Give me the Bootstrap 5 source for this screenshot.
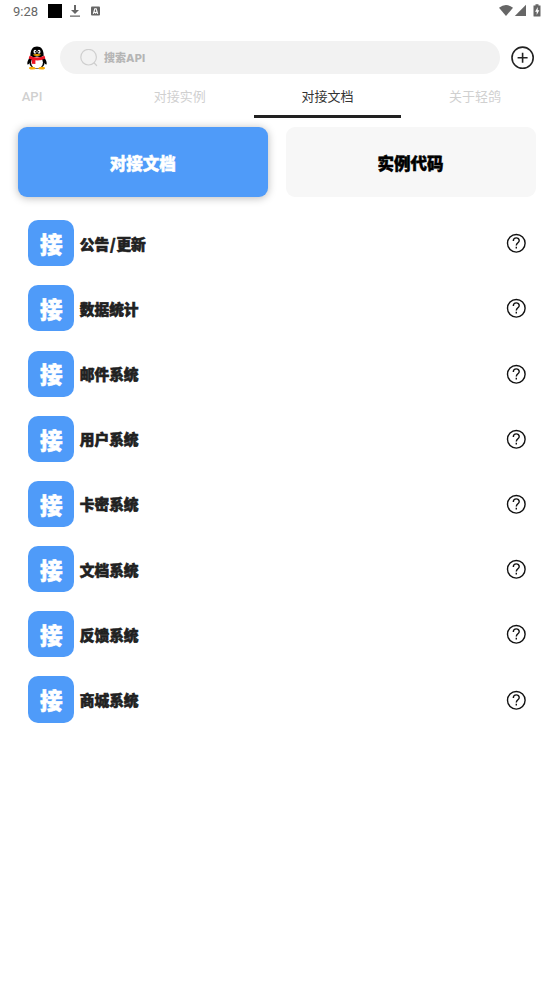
<!DOCTYPE html>
<html lang="zh-CN">
<head>
  <meta charset="UTF-8">
  <meta name="viewport" content="width=device-width, initial-scale=1">
  <title>对接文档</title>
  <link href="https://cdn.jsdelivr.net/npm/bootstrap@5.3.2/dist/css/bootstrap.min.css" rel="stylesheet">
  <style>
    body { font-family: Roboto, "Noto Sans CJK SC", sans-serif; color: #212121; overflow: hidden; }
    svg { display: block; flex-shrink: 0; }
    .heavy { font-family: "Noto Sans CJK SC", sans-serif; font-weight: 900; }

    .status-bar { height: 24px; padding: 0 12px 1px 13px; font-size: 13px; color: #666; }
    .status-bar svg { margin-bottom: 1px; }
    .status-marks { margin-left: 9px; }
    .top-bar { height: 51px; padding: 17px 19px 1px 26px; }
    .search-box { height: 33px; margin: 0 11px 0 12px; padding-left: 20px; background: #f2f2f2; color: #b5b5b5; font-size: 11px; }
    .search-hint { margin-left: 6px; }
    .latin { font-family: Inter, sans-serif; font-weight: 800; font-size: 11px; letter-spacing: .2px; }

    .tab-strip { height: 43px; margin-left: -41.8px; }
    .tab-strip .nav-link { width: 147.7px; height: 43px; padding: 12px 0 0; text-align: center; font-size: 13px; font-weight: 400; line-height: 20px; color: #d0d0d0; border-bottom: 3px solid transparent; border-radius: 0; }
    .tab-strip .nav-link:first-child { font-weight: 500; }
    .tab-strip .nav-link.active { color: #333; border-bottom-color: #212121; }

    .switches { padding: 9px 18px 13.6px 18.3px; gap: 18px; }
    .switches .btn { height: 70px; border: 0; border-radius: 9px; font-size: 16.5px; padding: 2px 1px 0 0; -webkit-text-stroke: .5px; }
    .btn-doc { background: #4f9bf9 !important; color: #fff !important; box-shadow: 0 1px 8px rgba(0, 0, 0, .28); }
    .btn-code { background: #f7f7f7 !important; color: #000 !important; }

    .doc-row { height: 65.2px; padding: 0 28px 0 28.2px; }
    .doc-icon { width: 46.1px; height: 46.1px; border-radius: 10px; background: #4f9bf9; color: #fff; font-size: 22.5px; line-height: 1; -webkit-text-stroke: .6px; }
    .doc-name { margin-left: 5.5px; font-size: 14.7px; line-height: 20px; padding-top: 1px; -webkit-text-stroke: .6px; }
    .slash { padding: 0 .8px; }
  </style>
</head>
<body class="bg-white">
  <div class="status-bar d-flex align-items-center">
    <span>9:28</span>
    <svg class="status-marks" width="58" height="16" viewBox="0 0 58 16">
      <path d="M1 1h14v14H1z" fill="#000"/>
      <path d="M27 2h2v5h3l-4 4-4-4h3zM23 12.6h10v1.2H23z" fill="#666"/>
      <rect x="44" y="3.5" width="9" height="9" rx="1" fill="#666"/>
      <path d="M46.3 10.8l1.5-5h1.4l1.5 5M47.3 9l1.2 1 1.2-1" fill="none" stroke="#fff" stroke-width="1.1"/>
    </svg>
    <svg class="ms-auto" width="44" height="16" viewBox="0 0 44 16">
      <path d="M1 4.7Q8-.7 15 4.7L8 13z" fill="#666"/>
      <path d="M28 1.8V13H16.8z" fill="#666"/>
      <path d="M37.5 1.3h3v1.2h2V13q0 .6-.6.6h-5.8q-.6 0-.6-.6V2.5h2z" fill="#666"/>
      <path d="M39.7 4l-2.6 4.7h1.6V12l2.6-4.8h-1.6z" fill="#fff"/>
    </svg>
  </div>

  <header class="top-bar d-flex align-items-center">
    <!-- penguin avatar -->
    <svg width="22" height="24" viewBox="0 0 22 24">
      <path d="M4.6 10.5Q.4 15.5 1.5 18.5q1 .5 2.5-2M17.4 10.5q4.2 5 3.1 8-1 .5-2.5-2" fill="#000"/>
      <ellipse cx="11" cy="15.8" rx="7.8" ry="7.2" fill="#000"/>
      <ellipse cx="11" cy="16.4" rx="5.9" ry="6" fill="#fff"/>
      <path d="M4.4 10C4.2 3.8 6.7.5 11 .5S17.8 3.8 17.6 10z" fill="#000"/>
      <ellipse cx="9" cy="5.7" rx="1.5" ry="2" fill="#fff"/>
      <ellipse cx="13" cy="5.7" rx="1.5" ry="2" fill="#fff"/>
      <circle cx="9.5" cy="5.8" r=".7"/>
      <circle cx="12.6" cy="5.8" r=".7"/>
      <path d="M6.7 8.7Q11 7.2 15.3 8.7 11 11.5 6.7 8.7z" fill="#f7a800"/>
      <path d="M3.5 9.7Q11 13.2 18.5 9.7l.8 2.7Q14.5 14.9 9.4 14.3v3.7l-3.6-.2.2-4.1-3.3-1.2z" fill="#ed1524"/>
      <path d="M3 21.6q3-1.8 7.1.6-.5 1.4-4 1.4T3 21.6zM19 21.6q-3-1.8-7.1.6.5 1.4 4 1.4t3.1-2z" fill="#f7a800"/>
    </svg>
    <div class="search-box heavy flex-grow-1 d-flex align-items-center rounded-pill">
      <svg width="18" height="18" viewBox="0 0 18 18" fill="none" stroke="#cfcfcf" stroke-width="1.2" stroke-linecap="round">
        <circle cx="8.6" cy="8.2" r="7.8"/>
        <path d="M14.2 14l2.4 2.5"/>
      </svg>
      <span class="search-hint">搜索<span class="latin">API</span></span>
    </div>
    <svg width="24" height="24" viewBox="0 0 24 24" fill="none" stroke="#222" stroke-width="1.6">
      <circle cx="11.6" cy="11.7" r="10.6"/>
      <path d="M11.6 6.7v10M6.6 11.7h10"/>
    </svg>
  </header>

  <nav class="tab-strip nav flex-nowrap overflow-hidden">
    <a class="nav-link flex-shrink-0" href="#">API</a>
    <a class="nav-link flex-shrink-0" href="#">对接实例</a>
    <a class="nav-link flex-shrink-0 active" href="#">对接文档</a>
    <a class="nav-link flex-shrink-0" href="#">关于轻鸽</a>
  </nav>

  <main>
    <div class="switches d-flex">
      <button class="btn btn-doc heavy flex-fill w-50">对接文档</button>
      <button class="btn btn-code heavy flex-fill w-50">实例代码</button>
    </div>
    <div id="docList"></div>
  </main>

  <script src="https://cdn.jsdelivr.net/npm/bootstrap@5.3.2/dist/js/bootstrap.bundle.min.js"></script>
  <script>
    const docs = ['公告/更新', '数据统计', '邮件系统', '用户系统', '卡密系统', '文档系统', '反馈系统', '商城系统'];

    document.getElementById('docList').innerHTML = docs.map(name => `
      <div class="doc-row d-flex align-items-center">
        <div class="doc-icon heavy d-flex align-items-center justify-content-center">接</div>
        <span class="doc-name heavy">${name.replace('/', '<span class="slash">/</span>')}</span>
        <svg class="ms-auto" width="20" height="20" viewBox="0 0 20 20" fill="none" stroke="#111" stroke-width="1.4">
          <circle cx="10.3" cy="10.3" r="8.8"/>
          <path d="M7.3 8C7.3 3.8 13.4 4 13.2 7.8 13.1 9.8 10.3 9.9 10.3 12.6"/>
          <path d="M10.3 13.8v1.6"/>
        </svg>
      </div>
    `).join('');
  </script>
</body>
</html>
